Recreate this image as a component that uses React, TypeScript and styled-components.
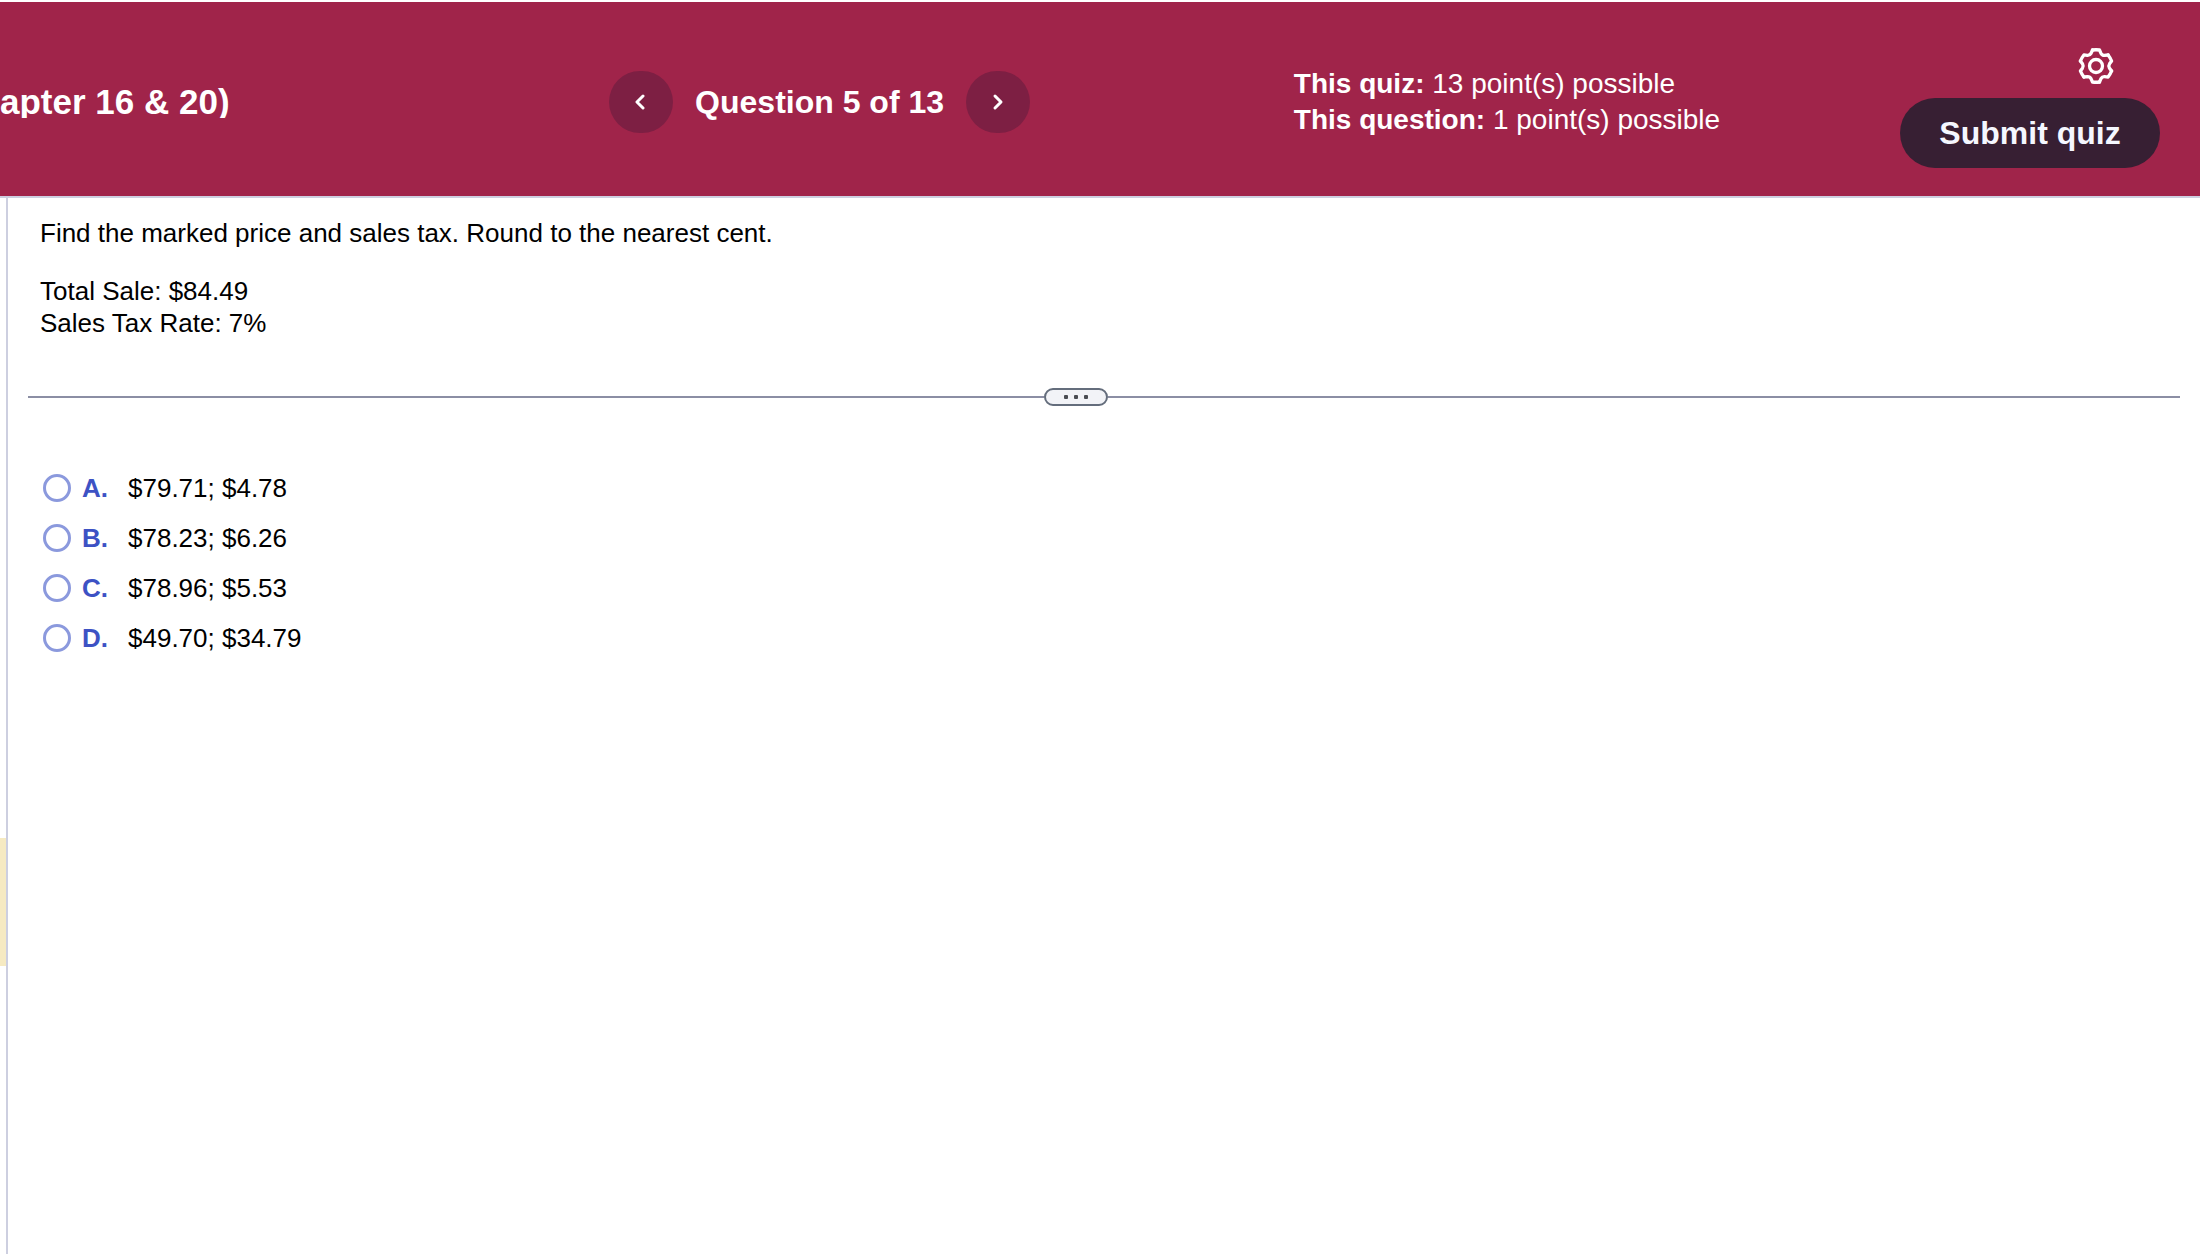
import React, { useState } from "react";
import styled, { createGlobalStyle } from "styled-components";

const GlobalStyle = createGlobalStyle`
  * { box-sizing: border-box; }
  body {
    margin: 0;
    background: #fff;
    color: #000;
    font-family: Arial, "Liberation Sans", sans-serif;
  }
`;

const Page = styled.div`
  display: flex;
  flex-direction: column;
  min-height: 100vh;
  padding-top: 2px;
`;

const Header = styled.header`
  display: grid;
  grid-template-columns: 28.2% 31.7% 1fr auto;
  align-items: center;
  min-height: 196px;
  padding: 6px 40px 0 0;
  background: #a0244a;
  border-bottom: 2px solid #cdcfe0;
  color: #fff;
`;

const Title = styled.h1`
  margin: 0;
  overflow: hidden;
  font-size: 35px;
  line-height: 32px;
  white-space: nowrap;
`;

const Pager = styled.nav`
  display: flex;
  align-items: center;
  gap: 22px;
`;

const PagerButton = styled.button`
  display: flex;
  align-items: center;
  justify-content: center;
  width: 64px;
  height: 62px;
  padding: 0;
  border: 0;
  border-radius: 32px;
  background: #7d1f43;
  color: #fff;
`;

const PagerLabel = styled.h2`
  margin: 0;
  font-size: 32px;
  line-height: 36px;
  white-space: nowrap;
`;

const Points = styled.div`
  font-size: 28px;
  line-height: 36px;
  white-space: nowrap;
`;

const Actions = styled.div`
  display: flex;
  flex-direction: column;
  align-items: flex-end;
  align-self: start;
  gap: 14px;
  padding-top: 40px;
`;

const SettingsButton = styled.button`
  display: flex;
  margin-right: 46px;
  padding: 0;
  border: 0;
  background: none;
  color: #fff;
`;

const SubmitButton = styled.button`
  height: 70px;
  width: 260px;
  padding: 0;
  border: 0;
  border-radius: 35px;
  background: #371f33;
  color: #f5f7ff;
  font: bold 32px/36px Arial, "Liberation Sans", sans-serif;
`;

const Body = styled.div`
  display: flex;
  flex: 1;
`;

const SideStrip = styled.aside`
  width: 8px;
  padding-top: 640px;
  border-right: 2px solid #cdcfe0;
`;

const SideMarker = styled.div`
  height: 128px;
  background: #f6eac2;
`;

const Main = styled.main`
  flex: 1;
  padding: 19px 20px 0;
  font-size: 26px;
  line-height: 32px;
`;

const Prompt = styled.section`
  padding: 0 12px 49px;
`;

const Paragraph = styled.p`
  margin: 0 0 26px;
`;

const Divider = styled.div`
  display: flex;
  align-items: center;
  margin-bottom: 66px;
`;

const Rule = styled.div<{ $share: number }>`
  flex: ${({ $share }) => $share};
  height: 2px;
  background: #8b8ea4;
`;

const Handle = styled.button`
  display: flex;
  align-items: center;
  justify-content: center;
  gap: 6px;
  width: 64px;
  height: 18px;
  padding: 0;
  border: 2px solid #646d7c;
  border-radius: 9px;
  background: #f2f3f7;
`;

const Dot = styled.span`
  width: 4px;
  height: 4px;
  border-radius: 1px;
  background: #4a4c52;
`;

const Choices = styled.fieldset`
  display: flex;
  flex-direction: column;
  gap: 18px;
  margin: 0;
  padding: 0 15px;
  border: 0;
`;

const Choice = styled.label`
  display: flex;
  align-items: center;
  align-self: flex-start;
`;

const Radio = styled.input`
  appearance: none;
  width: 28px;
  height: 28px;
  margin: 0 11px 0 0;
  border: 3px solid #8b99dd;
  border-radius: 50%;
  background: #fff;

  &:checked {
    background: radial-gradient(#3d52c4 40%, #fff 45%);
  }
`;

const Letter = styled.b`
  width: 46px;
  color: #3d52c4;
`;

const choices = [
  { letter: "A.", text: "$79.71; $4.78" },
  { letter: "B.", text: "$78.23; $6.26" },
  { letter: "C.", text: "$78.96; $5.53" },
  { letter: "D.", text: "$49.70; $34.79" },
];

const Chevron = ({ d }: { d: string }) => (
  <svg width="12" height="18" viewBox="0 0 12 18" fill="none" stroke="currentColor" strokeWidth="3" strokeLinecap="round" strokeLinejoin="round" aria-hidden="true">
    <path d={d} />
  </svg>
);

// One tooth and the notch after it, repeated every 60 degrees around the hub.
const teeth = [0, 60, 120, 180, 240, 300];

const Gear = () => (
  <svg width="36" height="36" viewBox="-18 -18 36 36" fill="none" stroke="currentColor" strokeWidth="3.3" strokeLinecap="round" strokeLinejoin="round" aria-hidden="true">
    <circle r="6.5" />
    {teeth.map((angle) => (
      <path key={angle} transform={`rotate(${angle})`} d="M-3.5-16Q0-16.5 3.5-16L4.9-12.8Q6-10.6 8.4-10.6L12.1-11" />
    ))}
  </svg>
);

export default function App() {
  const [selected, setSelected] = useState("");
  return (
    <>
      <GlobalStyle />
      <Page>
        <Header>
          <Title>apter 16 &amp; 20)</Title>
          <Pager aria-label="Questions">
            <PagerButton aria-label="Previous question"><Chevron d="M8 3L2 9l6 6" /></PagerButton>
            <PagerLabel>Question 5 of 13</PagerLabel>
            <PagerButton aria-label="Next question"><Chevron d="M3 3l6 6-6 6" /></PagerButton>
          </Pager>
          <Points>
            <div><b>This quiz:</b> 13 point(s) possible</div>
            <div><b>This question:</b> 1 point(s) possible</div>
          </Points>
          <Actions>
            <SettingsButton aria-label="Settings"><Gear /></SettingsButton>
            <SubmitButton>Submit quiz</SubmitButton>
          </Actions>
        </Header>
        <Body>
          <SideStrip><SideMarker /></SideStrip>
          <Main>
            <Prompt>
              <Paragraph>Find the marked price and sales tax. Round to the nearest cent.</Paragraph>
              <div>Total Sale: $84.49</div>
              <div>Sales Tax Rate: 7%</div>
            </Prompt>
            <Divider>
              <Rule $share={127} />
              <Handle aria-label="Resize panels"><Dot /><Dot /><Dot /></Handle>
              <Rule $share={134} />
            </Divider>
            <Choices aria-label="Answer choices">
              {choices.map(({ letter, text }) => (
                <Choice key={letter}>
                  <Radio type="radio" name="answer" value={letter} checked={selected === letter} onChange={() => setSelected(letter)} />
                  <Letter>{letter}</Letter>
                  <span>{text}</span>
                </Choice>
              ))}
            </Choices>
          </Main>
        </Body>
      </Page>
    </>
  );
}
